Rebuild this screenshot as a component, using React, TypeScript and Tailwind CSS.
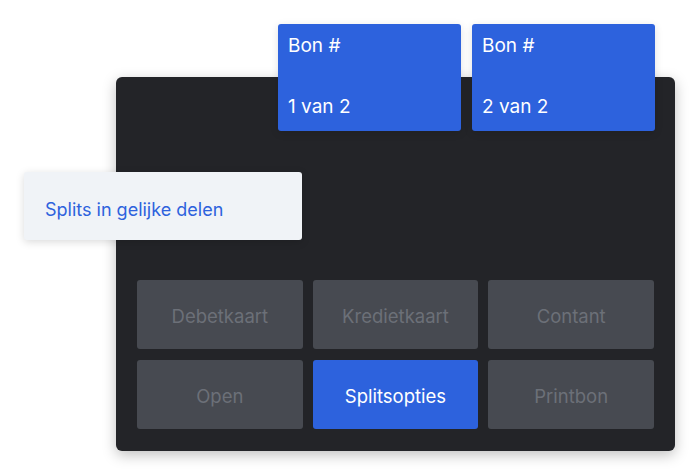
const buttons = [
  { label: "Debetkaart" },
  { label: "Kredietkaart" },
  { label: "Contant" },
  { label: "Open" },
  { label: "Splitsopties", active: true },
  { label: "Printbon" },
]

function BonCard({ part }: { part: string }) {
  return (
    <div className="w-[183px] h-[107px] rounded-[3px] bg-[#2d62dd] shadow-[0_2px_8px_rgba(0,0,0,0.12)] flex flex-col justify-between px-[10px] pt-[11px] pb-[13px] text-white text-[19px] leading-[22px]">
      <span>Bon #</span>
      <span>{part}</span>
    </div>
  )
}

export default function App() {
  return (
    <div
      className="relative w-[700px] h-[475px] bg-white overflow-hidden"
      style={{ fontFamily: "Inter, 'Noto Sans', sans-serif" }}
    >
      <div className="ml-[116px] mt-[77px] w-[559px] h-[374px] rounded-[6px] bg-[#232428] shadow-[0_4px_14px_rgba(0,0,0,0.25)] flex flex-col justify-end px-[21px] pb-[22px]">
        <div className="grid grid-cols-3 gap-x-[10px] gap-y-[11px]">
          {buttons.map((b) => (
            <div
              key={b.label}
              className={
                b.active
                  ? "h-[69px] rounded-[3px] bg-[#2d62dd] text-white flex items-center justify-center pt-[4px] text-[18.5px]"
                  : "h-[69px] rounded-[3px] bg-[#474a51] text-[#6c7078] flex items-center justify-center pt-[4px] text-[18.5px]"
              }
            >
              {b.label}
            </div>
          ))}
        </div>
      </div>

      <div className="absolute left-[278px] top-[24px] flex gap-[11px]">
        <BonCard part="1 van 2" />
        <BonCard part="2 van 2" />
      </div>

      <div className="absolute left-[24px] top-[172px] w-[278px] h-[68px] rounded-[3px] bg-[#f0f3f7] shadow-[0_2px_8px_rgba(0,0,0,0.15)] flex items-center px-[21px] pt-[6px] text-[18px] text-[#2d62dd]">
        Splits in gelijke delen
      </div>
    </div>
  )
}
